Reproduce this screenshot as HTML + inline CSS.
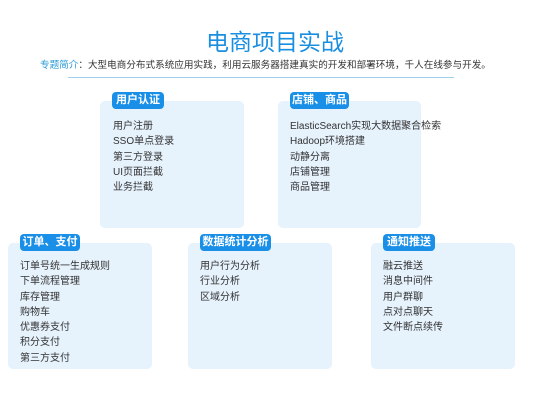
<!DOCTYPE html>
<html><head><meta charset="utf-8"><style>
*{margin:0;padding:0;box-sizing:border-box}
body{width:550px;height:400px;background:#fff;font-family:"Liberation Sans","Noto Sans CJK SC",sans-serif;position:relative;overflow:hidden}
.t{position:absolute;left:0;width:550px;top:27px;text-align:center;font-size:23px;color:#1a8fe0;line-height:30px}
.s{position:absolute;left:40px;top:59px;font-size:9.6px;color:#333;white-space:nowrap;line-height:14px}
.s b{font-weight:normal;color:#2a9ad8}
.ln{position:absolute;left:68px;top:77px;width:386px;height:1px;background:#9dd0ea}
.box{position:absolute;background:#e6f2fc;border-radius:5px}
.tag{position:absolute;background:#1a8fe8;color:#fff;font-size:11px;font-weight:bold;border-radius:4px;height:17px;line-height:17px;text-align:center}
.it{position:absolute;font-size:10px;color:#333;line-height:15.3px;white-space:nowrap}
</style></head><body>
<div class="t">电商项目实战</div>
<div class="s"><b>专题简介</b>：大型电商分布式系统应用实践，利用云服务器搭建真实的开发和部署环境，千人在线参与开发。</div>
<div class="ln"></div>

<div class="box" style="left:100px;top:101px;width:144px;height:127px"></div>
<div class="tag" style="left:112px;top:92px;width:52px">用户认证</div>
<div class="it" style="left:113px;top:119px">用户注册<br>SSO单点登录<br>第三方登录<br>UI页面拦截<br>业务拦截</div>

<div class="box" style="left:278px;top:101px;width:143px;height:127px"></div>
<div class="tag" style="left:290px;top:92px;width:59px">店铺、商品</div>
<div class="it" style="left:290px;top:119px">ElasticSearch实现大数据聚合检索<br>Hadoop环境搭建<br>动静分离<br>店铺管理<br>商品管理</div>

<div class="box" style="left:8px;top:243px;width:144px;height:126px"></div>
<div class="tag" style="left:20px;top:234px;width:60px">订单、支付</div>
<div class="it" style="left:20px;top:259px">订单号统一生成规则<br>下单流程管理<br>库存管理<br>购物车<br>优惠券支付<br>积分支付<br>第三方支付</div>

<div class="box" style="left:188px;top:243px;width:144px;height:126px"></div>
<div class="tag" style="left:200px;top:234px;width:71px">数据统计分析</div>
<div class="it" style="left:200px;top:259px">用户行为分析<br>行业分析<br>区域分析</div>

<div class="box" style="left:371px;top:243px;width:144px;height:126px"></div>
<div class="tag" style="left:383px;top:234px;width:52px">通知推送</div>
<div class="it" style="left:383px;top:259px">融云推送<br>消息中间件<br>用户群聊<br>点对点聊天<br>文件断点续传</div>
</body></html>
